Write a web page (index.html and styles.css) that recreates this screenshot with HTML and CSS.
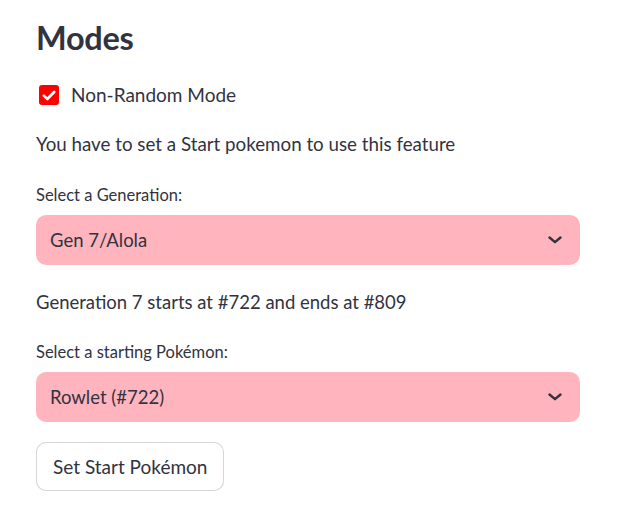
FILE: index.html
```html
<!DOCTYPE html>
<html>
<head>
<meta charset="utf-8">
<link rel="stylesheet" href="styles.css">
</head>
<body>
<main class="page">
  <h3 class="title">Modes</h3>
  <label class="check">
    <span class="box"><svg width="14" height="11" viewBox="0 0 14 11"><path d="M1.8 5.6 L5.3 9 L12.2 2" fill="none" stroke="#fff" stroke-width="2.6" stroke-linecap="round" stroke-linejoin="round"/></svg></span>
    <span class="check-text">Non-Random Mode</span>
  </label>
  <p class="text first">You have to set a Start pokemon to use this feature</p>
  <div class="field">
    <div class="label">Select a Generation:</div>
    <div class="select"><span>Gen 7/Alola</span><svg class="chev" width="14" height="8" viewBox="0 0 14 8"><path d="M1.5 1.5 L7 6.2 L12.5 1.5" fill="none" stroke="#31333f" stroke-width="2.4" stroke-linecap="round" stroke-linejoin="round"/></svg></div>
  </div>
  <p class="text gen">Generation 7 starts at #722 and ends at #809</p>
  <div class="field second">
    <div class="label">Select a starting Pokémon:</div>
    <div class="select"><span>Rowlet (#722)</span><svg class="chev" width="14" height="8" viewBox="0 0 14 8"><path d="M1.5 1.5 L7 6.2 L12.5 1.5" fill="none" stroke="#31333f" stroke-width="2.4" stroke-linecap="round" stroke-linejoin="round"/></svg></div>
  </div>
  <button class="btn">Set Start Pokémon</button>
</main>
</body>
</html>
```
FILE: styles.css
```css
html, body { margin: 0; padding: 0; background: #fff; }
body {
  font-family: Lato, "Noto Sans", sans-serif;
  color: #31333f;
  font-size: 18.5px;
}
.page {
  width: 544px;
  padding: 18px 0 0 36px;
  display: flex;
  flex-direction: column;
}
.title {
  margin: 0;
  font-size: 32.5px;
  font-weight: 700;
  line-height: 40px;
  letter-spacing: -0.3px;
}
.check {
  display: flex;
  align-items: center;
  gap: 12px;
  margin-top: 25px;
  padding-left: 3px;
  height: 24px;
}
.box {
  width: 20px;
  height: 20px;
  border-radius: 3px;
  background: #ff0000;
  display: flex;
  align-items: center;
  justify-content: center;
}
.check-text { line-height: 24px; font-size: 19px; }
.text {
  margin: 24px 0 0;
  line-height: 26px;
}
.text.first { font-size: 18.75px; }
.field { display: flex; flex-direction: column; margin-top: 28px; }
.field.second { margin-top: 27px; }
.label {
  font-size: 16.5px;
  line-height: 20px;
  margin-bottom: 10px;
}
.select {
  height: 50px;
  border-radius: 10px;
  background: #ffb4be;
  display: flex;
  align-items: center;
  justify-content: space-between;
  padding: 0 18px 0 14px;
}
.chev { display: block; }
.text.gen { margin-top: 24px; }
.btn {
  align-self: flex-start;
  margin-top: 20px;
  height: 49px;
  padding: 0 16px;
  border: 1px solid rgba(49, 51, 63, 0.2);
  border-radius: 10px;
  background: #fff;
  font-family: inherit;
  font-size: 19px;
  color: #31333f;
}
```
